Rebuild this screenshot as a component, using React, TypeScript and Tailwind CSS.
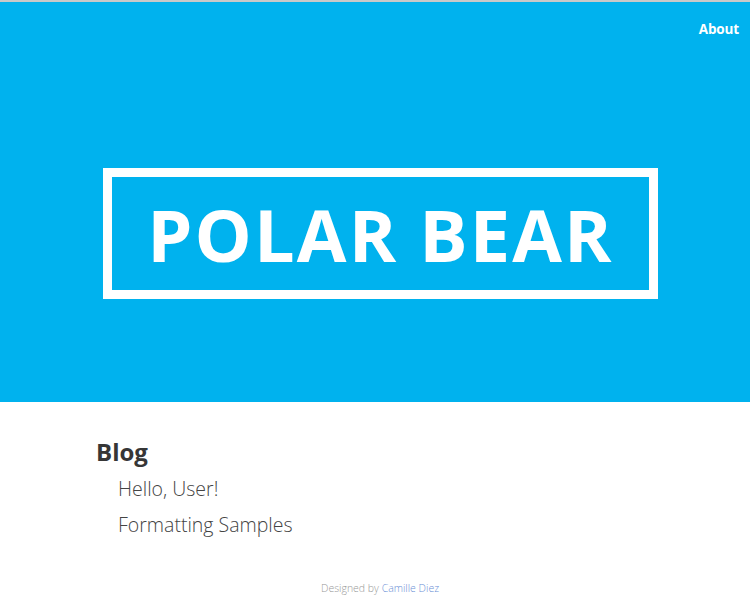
export default function App() {
    return (
        <div className="min-h-[600px] bg-white font-['Open_Sans',sans-serif] border-t-2 border-[#c9c9c9]">
            <header className="h-[400px] bg-[#00b2ee] flex flex-col">
                <nav className="flex justify-end pt-[17px] pr-[11px]">
                    <a href="#" className="text-white text-[13.5px] font-bold leading-5 tracking-[-0.01em]">About</a>
                </nav>
                <div className="flex pl-[103px] mt-[129px]">
                    <div className="w-[555px] h-[131px] border-[9px] border-white flex items-center justify-center">
                        <h1 className="text-white text-[72px] font-bold tracking-[0.03em] leading-none">POLAR BEAR</h1>
                    </div>
                </div>
            </header>
            <main className="pl-[96px] pt-[34px]">
                <h2 className="text-[#363636] text-[24px] font-bold leading-8">Blog</h2>
                <ul className="pl-[22px] mt-[8px] flex flex-col gap-[10px]">
                    <li><a href="#" className="text-[#444] text-[19.5px] font-light leading-[25px]">Hello, User!</a></li>
                    <li><a href="#" className="text-[#444] text-[19.5px] font-light leading-[25px]">Formatting Samples</a></li>
                </ul>
            </main>
            <footer className="text-center text-[10.5px] text-[#999] font-light pt-[43px] pl-[10px]">
                Designed by <a href="#" className="text-[#6b8fd6]">Camille Diez</a>
            </footer>
        </div>
    )
}
